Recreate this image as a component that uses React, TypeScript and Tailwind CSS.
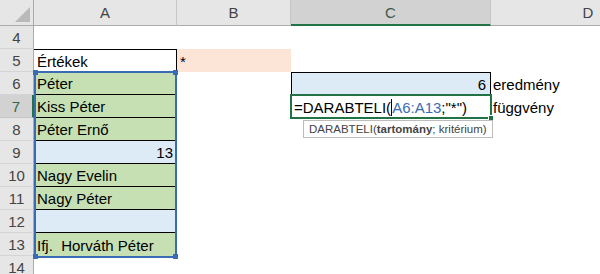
import React from "react";

const cellText = "flex items-end leading-[17px] pb-[2px] whitespace-pre overflow-hidden";

function RowHead({ n, active = false }: { n: number; active?: boolean }) {
  return (
    <div
      className={
        "w-[34px] shrink-0 h-full flex items-end justify-center leading-[17px] pb-[2px] text-[15px] border-b " +
        (active
          ? "bg-[#d2d2d2] text-[#2f6a4a] border-r-2 border-r-[#217346] border-b-[#c6c6c6]"
          : "bg-[#e6e6e6] text-[#444] border-r border-r-[#ababab] border-b-[#d4d4d4]")
      }
    >
      {n}
    </div>
  );
}

export default function App() {
  return (
    <div className="relative w-[600px] h-[274px] overflow-hidden bg-white font-['Liberation_Sans',Arial,sans-serif] text-[15px] text-black">
      {/* Column headers */}
      <div className="flex h-[26px] text-[#444]">
        <div className="relative w-[34px] shrink-0 bg-[#e6e6e6] border-r border-b border-[#ababab]">
          <svg className="absolute right-[3px] bottom-[3px]" width="15" height="15" viewBox="0 0 15 15">
            <polygon points="15,0 15,15 0,15" fill="#b9b9b9" />
          </svg>
        </div>
        <div className="w-[143px] shrink-0 bg-[#e6e6e6] border-r border-r-[#c6c6c6] border-b border-b-[#ababab] flex items-end justify-center leading-[17px] pb-[4px]">A</div>
        <div className="w-[114px] shrink-0 bg-[#e6e6e6] border-r border-r-[#c6c6c6] border-b border-b-[#ababab] flex items-end justify-center leading-[17px] pb-[4px]">B</div>
        <div className="w-[200px] shrink-0 bg-[#d2d2d2] border-r border-r-[#c6c6c6] border-b-2 border-b-[#217346] flex items-end justify-center leading-[17px] pb-[3px] text-[#3d5a4a]">C</div>
        <div className="w-[194px] shrink-0 bg-[#e6e6e6] border-b border-b-[#ababab] flex items-end justify-center leading-[17px] pb-[4px]">D</div>
      </div>

      {/* Row 4 */}
      <div className="flex h-[23px]">
        <RowHead n={4} />
      </div>
      {/* Row 5 */}
      <div className="flex h-[23px]">
        <RowHead n={5} />
        <div className={"w-[143px] shrink-0 border-t border-r border-black pl-[3px] " + cellText}>Értékek</div>
        <div className={"w-[114px] shrink-0 bg-[#fce4d6] pl-[3px] " + cellText}>*</div>
      </div>
      {/* Row 6 */}
      <div className="flex h-[23px]">
        <RowHead n={6} />
        <div className={"w-[143px] shrink-0 bg-[#c6e0b4] border-b border-black pl-[3px] " + cellText}>Péter</div>
        <div className="w-[114px] shrink-0" />
        <div className={"w-[200px] shrink-0 bg-[#ddebf7] border-t border-l border-r border-black justify-end pr-[4px] " + cellText}>6</div>
        <div className={"flex-1 pl-[2px] " + cellText}>eredmény</div>
      </div>
      {/* Row 7 */}
      <div className="flex h-[23px]">
        <RowHead n={7} active />
        <div className={"w-[143px] shrink-0 bg-[#c6e0b4] border-b border-black pl-[3px] " + cellText}>Kiss Péter</div>
        <div className="w-[114px] shrink-0" />
        <div className={"w-[200px] shrink-0 pl-[3px] " + cellText}>
          <span>=DARABTELI(</span>
          <span className="inline-block w-px h-[17px] bg-black" />
          <span className="text-[#3a6bb5]">A6:A13</span>
          <span>;"*")</span>
        </div>
        <div className={"flex-1 pl-[2px] " + cellText}>függvény</div>
      </div>
      {/* Row 8 */}
      <div className="flex h-[23px]">
        <RowHead n={8} />
        <div className={"w-[143px] shrink-0 bg-[#c6e0b4] border-b border-black pl-[3px] " + cellText}>Péter Ernő</div>
      </div>
      {/* Row 9 */}
      <div className="flex h-[23px]">
        <RowHead n={9} />
        <div className={"w-[143px] shrink-0 bg-[#ddebf7] border-b border-black justify-end pr-[4px] " + cellText}>13</div>
      </div>
      {/* Row 10 */}
      <div className="flex h-[23px]">
        <RowHead n={10} />
        <div className={"w-[143px] shrink-0 bg-[#c6e0b4] border-b border-black pl-[3px] " + cellText}>Nagy Evelin</div>
      </div>
      {/* Row 11 */}
      <div className="flex h-[23px]">
        <RowHead n={11} />
        <div className={"w-[143px] shrink-0 bg-[#c6e0b4] border-b border-black pl-[3px] " + cellText}>Nagy Péter</div>
      </div>
      {/* Row 12 */}
      <div className="flex h-[23px]">
        <RowHead n={12} />
        <div className={"w-[143px] shrink-0 bg-[#ddebf7] border-b border-black " + cellText} />
      </div>
      {/* Row 13 */}
      <div className="flex h-[23px]">
        <RowHead n={13} />
        <div className={"w-[143px] shrink-0 bg-[#c6e0b4] pl-[3px] " + cellText}>{"Ifj.  Horváth Péter"}</div>
      </div>
      {/* Row 14 */}
      <div className="flex h-[23px]">
        <RowHead n={14} />
      </div>

      {/* Range reference highlight A6:A13 */}
      <div className="absolute left-[34px] top-[71px] w-[143px] h-[187px] border-2 border-[#3a6bb5] pointer-events-none">
        <div className="absolute -left-[3px] -top-[3px] w-[5px] h-[5px] bg-[#3a6bb5]" />
        <div className="absolute -right-[3px] -top-[3px] w-[5px] h-[5px] bg-[#3a6bb5]" />
        <div className="absolute -left-[3px] -bottom-[3px] w-[5px] h-[5px] bg-[#3a6bb5]" />
        <div className="absolute -right-[3px] -bottom-[3px] w-[5px] h-[5px] bg-[#3a6bb5]" />
      </div>

      {/* Active cell C7 */}
      <div className="absolute left-[290px] top-[94px] w-[202px] h-[25px] border-2 border-[#217346] pointer-events-none">
        <div className="absolute -right-[4px] -bottom-[4px] w-[6px] h-[6px] bg-[#217346] border border-white" />
      </div>

      {/* Function tooltip */}
      <div className="absolute left-[303px] top-[120px] h-[18px] px-[5px] bg-white border border-[#bcbcbc] text-[11.5px] leading-[16px] text-[#444] whitespace-nowrap">
        DARABTELI(<span className="font-bold">tartomány</span>; kritérium)
      </div>
    </div>
  );
}
